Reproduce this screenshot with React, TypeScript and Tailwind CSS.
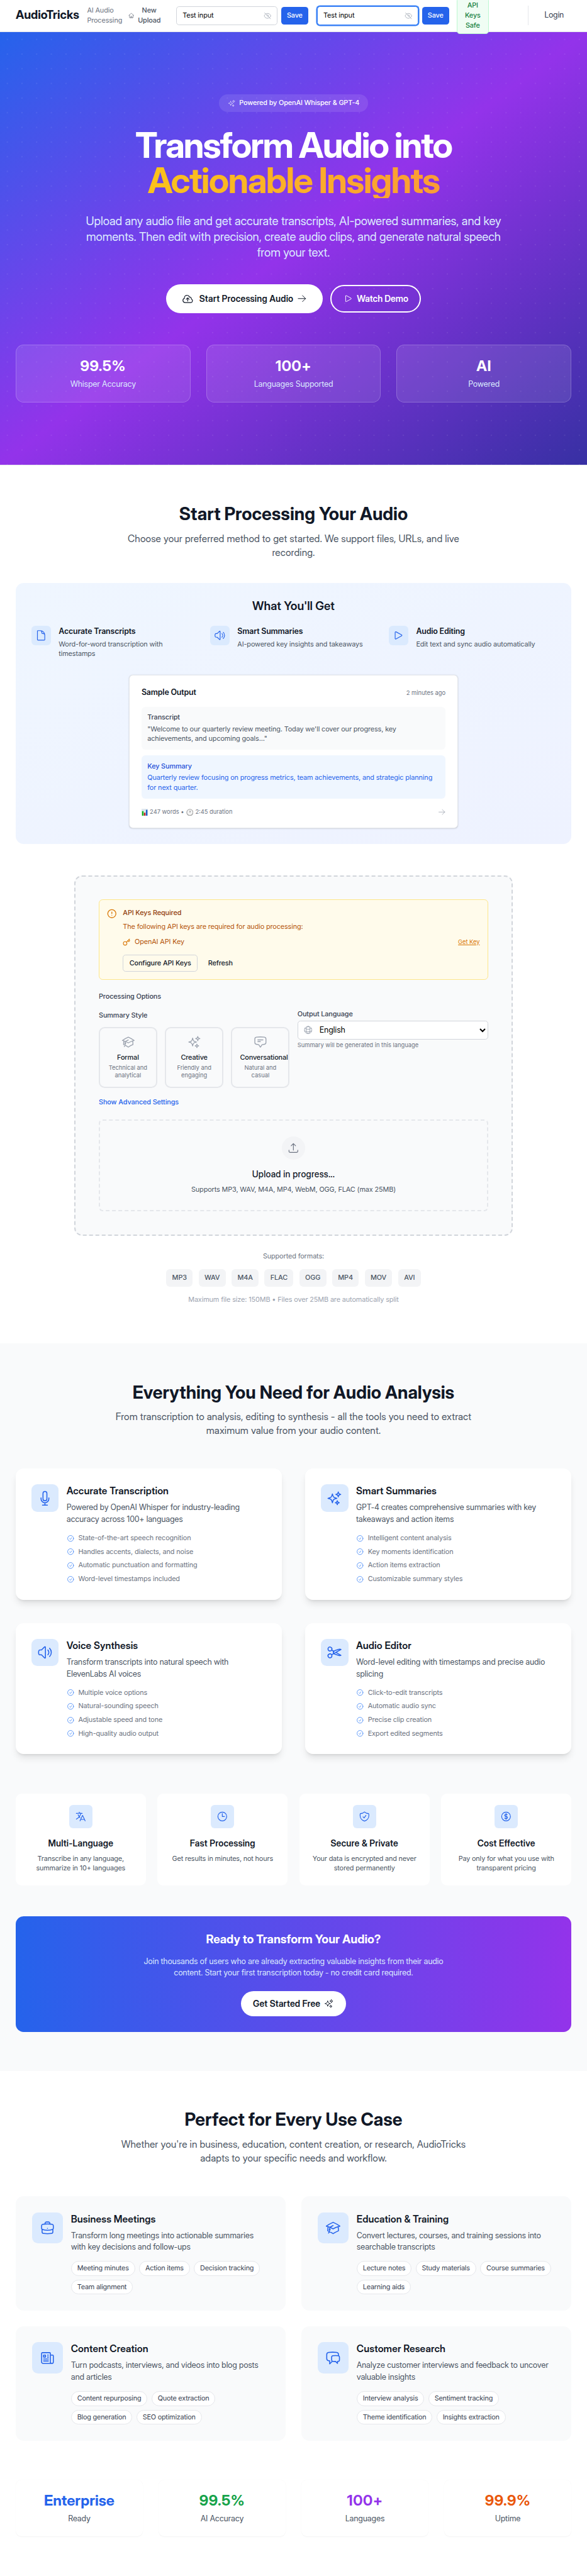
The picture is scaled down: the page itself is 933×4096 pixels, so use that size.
import type { ComponentType, ReactNode } from "react";
import {
  HiOutlineAcademicCap,
  HiOutlineArrowRight,
  HiOutlineArrowUpTray,
  HiOutlineBriefcase,
  HiOutlineChatBubbleBottomCenterText,
  HiOutlineChatBubbleLeftRight,
  HiOutlineCheckCircle,
  HiOutlineClock,
  HiOutlineCloudArrowUp,
  HiOutlineCurrencyDollar,
  HiOutlineDocument,
  HiOutlineEyeSlash,
  HiOutlineGlobeAlt,
  HiOutlineHome,
  HiOutlineLanguage,
  HiOutlineMicrophone,
  HiOutlineNewspaper,
  HiOutlinePlay,
  HiOutlineScissors,
  HiOutlineShieldCheck,
  HiOutlineSparkles,
  HiOutlineSpeakerWave,
} from "react-icons/hi2";
import { CircleAlert, Key } from "lucide-react";

type Icon = ComponentType<{ className?: string }>;

function KeyInput({ focused = false }: { focused?: boolean }) {
  return (
    <div
      className={
        focused
          ? "flex h-[38px] w-[207px] items-center justify-between rounded-md border border-[#3b82f6] bg-white pr-[11px] pl-3 ring-2 ring-[#3b82f6]"
          : "flex h-[38px] w-[207px] items-center justify-between rounded-md border border-[#d1d5db] bg-white pr-[11px] pl-3"
      }
    >
      <span className="text-[14px] leading-5 tracking-[-0.012em] text-black">Test input</span>
      <HiOutlineEyeSlash className="size-4 text-[#9ca3af]" />
    </div>
  );
}

function SaveButton() {
  return (
    <button className="h-9 w-[55px] rounded-md bg-[#2563eb] text-[14px] leading-5 font-medium tracking-[-0.013em] text-white">
      Save
    </button>
  );
}

function Header() {
  return (
    <header className="flex h-[65px] items-center border-b border-[#e5e7eb] bg-white pl-8">
      <div className="w-[130px] font-['Inter_Display','Inter',sans-serif] text-[24px] leading-8 font-bold whitespace-nowrap text-[#111827]">
        AudioTricks
      </div>
      <div className="ml-4 w-[71px] text-[14px] leading-5 tracking-[-0.012em] text-[#6b7280]">AI Audio Processing</div>
      <HiOutlineHome className="ml-[14px] size-3 shrink-0 text-[#4b5563]" />
      <div className="ml-[7px] w-[46px] text-center text-[14px] leading-5 font-medium tracking-[-0.013em] text-[#4b5563]">
        New Upload
      </div>
      <div className="ml-8 flex items-center gap-2">
        <KeyInput />
        <SaveButton />
      </div>
      <div className="ml-[18px] flex items-center gap-2">
        <KeyInput focused />
        <SaveButton />
      </div>
      <div className="relative z-10 ml-4 flex h-[74px] w-[65px] shrink-0 items-center justify-center rounded-md border border-[#bbf7d0] bg-[#f0fdf4] px-3 text-center text-[14px] leading-5 font-medium tracking-[-0.013em] text-[#15803d]">
        API Keys Safe
      </div>
      <div className="ml-20 h-10 w-px bg-[#e5e7eb]" />
      <div className="ml-[33px] text-[16px] leading-6 tracking-[-0.025em] text-[#374151]">Login</div>
    </header>
  );
}

const heroStats = [
  ["99.5%", "Whisper Accuracy"],
  ["100+", "Languages Supported"],
  ["AI", "Powered"],
];

function Hero() {
  return (
    <section className="bg-[radial-gradient(circle_at_15px_15px,rgba(255,255,255,0.08)_1px,transparent_1.5px),linear-gradient(to_bottom_right,#2563eb,#9333ea,#3730a3)] bg-[length:30px_30px,100%_100%] px-8 py-32 text-center">
      <div className="mx-auto flex h-9 w-[304px] items-center justify-center gap-2 rounded-full bg-white/10 text-[14px] leading-5 font-medium tracking-[-0.013em] whitespace-nowrap text-white">
        <HiOutlineSparkles className="size-4 text-white/70" />
        Powered by OpenAI Whisper &amp; GPT-4
      </div>
      <h1 className="mx-auto mt-8 max-w-[896px] font-['Inter_Display','Inter',sans-serif] text-[72px] leading-none font-bold tracking-[-0.0366em] text-white">
        Transform Audio into
        <span className="block bg-[linear-gradient(to_right,#facc15,#fb923c)] bg-clip-text tracking-[-0.031em] text-transparent">
          Actionable Insights
        </span>
      </h1>
      <p className="mx-auto mt-8 max-w-[896px] font-['Inter_Display','Inter',sans-serif] text-[24px] leading-8 tracking-[-0.006em] whitespace-nowrap text-[#dbeafe]">
        Upload any audio file and get accurate transcripts, AI-powered summaries, and key
        <br />
        moments. Then edit with precision, create audio clips, and generate natural speech
        <br />
        from your text.
      </p>
      <div className="mt-12 flex items-center justify-center gap-4 font-['Inter_Display','Inter',sans-serif] text-[18px] leading-7 font-semibold whitespace-nowrap">
        <button className="flex h-[60px] items-center rounded-full bg-white px-8 tracking-[0.013em] text-[#111827]">
          <HiOutlineCloudArrowUp className="mr-3 size-6" />
          Start Processing Audio
          <HiOutlineArrowRight className="ml-2 size-5" />
        </button>
        <button className="flex h-14 items-center rounded-full border-[2.6px] border-white px-[23.4px] text-white">
          <HiOutlinePlay className="mr-2 size-5" />
          Watch Demo
        </button>
      </div>
      <div className="mt-16 grid grid-cols-3 gap-8">
        {heroStats.map(([value, label]) => (
          <div key={label} className="h-[118px] rounded-2xl border border-white/20 bg-white/10 p-6">
            <div className="mb-2 font-['Inter_Display','Inter',sans-serif] text-[30px] leading-9 font-bold tracking-[0.025em] text-white">
              {value}
            </div>
            <div className="text-[16px] leading-6 tracking-[-0.018em] text-[#dbeafe]">{label}</div>
          </div>
        ))}
      </div>
    </section>
  );
}

function SectionTitle({ title, children }: { title: string; children: ReactNode }) {
  return (
    <div className="text-center font-['Inter_Display','Inter',sans-serif] whitespace-nowrap">
      <h2 className="text-[36px] leading-10 font-bold text-[#111827]">{title}</h2>
      <p className="mt-4 text-[20px] leading-7 tracking-[0.005em] text-[#4b5563]">{children}</p>
    </div>
  );
}

const benefits: [Icon, string, string][] = [
  [HiOutlineDocument, "Accurate Transcripts", "Word-for-word transcription with timestamps"],
  [HiOutlineSpeakerWave, "Smart Summaries", "AI-powered key insights and takeaways"],
  [HiOutlinePlay, "Audio Editing", "Edit text and sync audio automatically"],
];

function BarChartGlyph() {
  return (
    <svg viewBox="0 0 14 14" className="h-[15px] w-[13px]" preserveAspectRatio="none">
      <rect width="14" height="14" fill="#dfe8ee" />
      <rect x="1" y="4.5" width="3.4" height="9.5" fill="#12b31b" />
      <rect x="5.3" y="7.5" width="3.4" height="6.5" fill="#c81e1e" />
      <rect x="9.6" y="2" width="3.4" height="12" fill="#1d5fc4" />
    </svg>
  );
}

function ClockGlyph() {
  return (
    <svg viewBox="0 0 16 16" className="size-[15px]">
      <circle cx="8" cy="8" r="7.6" fill="#a3a3a3" />
      <circle cx="8" cy="7.8" r="6" fill="#f3f3f3" />
      <path d="M8 8V4M8 8L9.4 5" stroke="#777" strokeWidth="0.9" fill="none" />
    </svg>
  );
}

function SampleOutput() {
  return (
    <div className="mx-auto mt-8 h-[314px] w-[672px] rounded-lg border border-[#e5e7eb] bg-white p-6 shadow-sm">
      <div className="flex items-center justify-between">
        <span className="text-[16px] leading-6 font-semibold tracking-[-0.0155em] text-[#111827]">Sample Output</span>
        <span className="text-[12px] leading-4 text-[#6b7280]">2 minutes ago</span>
      </div>
      <div className="mt-4 rounded-lg bg-[#f9fafb] p-3 text-[14px] leading-5 tracking-[-0.012em] whitespace-nowrap">
        <div className="font-medium text-[#374151]">Transcript</div>
        <p className="mt-1 text-[#4b5563]">
          "Welcome to our quarterly review meeting. Today we'll cover our progress, key
          <br />
          achievements, and upcoming goals..."
        </p>
      </div>
      <div className="mt-3 rounded-lg bg-[#eff6ff] p-3 text-[14px] leading-5 tracking-[-0.012em] whitespace-nowrap">
        <div className="font-medium text-[#1d4ed8]">Key Summary</div>
        <p className="mt-1 text-[#2563eb]">
          Quarterly review focusing on progress metrics, team achievements, and strategic planning
          <br />
          for next quarter.
        </p>
      </div>
      <div className="mt-4 flex h-5 items-center justify-between pt-1">
        <div className="flex items-center gap-1 text-[12px] leading-4 whitespace-nowrap text-[#6b7280]">
          <BarChartGlyph />
          247 words •
          <ClockGlyph />
          2:45 duration
        </div>
        <HiOutlineArrowRight className="size-4 text-[#9ca3af]" />
      </div>
    </div>
  );
}

const styles: [Icon, string, string][] = [
  [HiOutlineAcademicCap, "Formal", "Technical and analytical"],
  [HiOutlineSparkles, "Creative", "Friendly and engaging"],
  [HiOutlineChatBubbleBottomCenterText, "Conversational", "Natural and casual"],
];

function UploadPanel() {
  return (
    <div className="mx-auto mt-16 h-[738px] w-[896px] rounded-2xl border-[2.6px] border-dashed border-[#d1d5db] bg-[#f9fafb] p-[47.4px] text-[14px] leading-5 tracking-[-0.012em]">
      <div className="flex h-[164px] rounded-lg border border-[#fde68a] bg-[#fffbeb] p-4">
        <CircleAlert className="mt-0.5 size-5 shrink-0 text-[#d97706]" />
        <div className="ml-3 flex-1">
          <div className="font-medium text-[#92400e]">API Keys Required</div>
          <div className="mt-2 text-[#b45309]">The following API keys are required for audio processing:</div>
          <div className="mt-3 flex items-center">
            <Key className="size-4 text-[#d97706]" />
            <span className="ml-2 flex-1 text-[#b45309]">OpenAI API Key</span>
            <a className="text-[12px] leading-4 tracking-normal text-[#d97706] underline">Get Key</a>
          </div>
          <div className="mt-4 flex gap-2 font-medium text-[#111827]">
            <button className="h-[34px] rounded-md border border-[#d1d5db] px-3">Configure API Keys</button>
            <button className="h-[34px] rounded-md border border-transparent px-3">Refresh</button>
          </div>
        </div>
      </div>

      <div className="mt-6 font-medium text-[#374151]">Processing Options</div>
      <div className="mt-4 grid grid-cols-2 gap-4">
        <div>
          <div className="pt-[3px] font-medium text-[#374151]">Summary Style</div>
          <div className="mt-[13px] grid grid-cols-3 gap-4">
            {styles.map(([StyleIcon, name, text]) => (
              <div
                key={name}
                className="flex h-[126px] min-w-0 flex-col items-center rounded-xl border-[2.6px] border-[#e5e7eb] p-[15.4px] text-center"
              >
                <StyleIcon className="size-7 shrink-0 text-[#9ca3af]" />
                <div className="mt-2 max-w-full font-medium text-[#111827]">{name}</div>
                <div className="mt-0.5 text-[12px] leading-4 tracking-normal text-[#6b7280]">{text}</div>
              </div>
            ))}
          </div>
        </div>
        <div>
          <div className="font-medium text-[#374151]">Output Language</div>
          <div className="relative mt-1">
            <HiOutlineGlobeAlt className="absolute top-[9px] left-3 size-5 text-[#9ca3af]" />
            <select className="block h-[38px] w-full rounded-md border border-[#d1d5db] bg-white pl-10 text-[16px] tracking-[-0.018em] text-black">
              <option>English</option>
            </select>
          </div>
          <div className="mt-1 text-[12px] leading-4 tracking-normal text-[#6b7280]">
            Summary will be generated in this language
          </div>
        </div>
      </div>
      <div className="mt-[19px] font-medium text-[#2563eb]">Show Advanced Settings</div>

      <div className="mt-[25px] flex h-[188px] flex-col items-center rounded-lg border-[2.6px] border-dashed border-[#e5e7eb] p-[31.4px]">
        <div className="flex size-12 items-center justify-center rounded-full bg-[#f3f4f6]">
          <HiOutlineArrowUpTray className="size-6 text-[#6b7280]" />
        </div>
        <div className="mt-4 font-['Inter_Display','Inter',sans-serif] text-[18px] leading-7 font-medium tracking-[0.019em] text-[#111827]">
          Upload in progress...
        </div>
        <div className="mt-2 text-[#4b5563]">Supports MP3, WAV, M4A, MP4, WebM, OGG, FLAC (max 25MB)</div>
      </div>
    </div>
  );
}

const formats = ["MP3", "WAV", "M4A", "FLAC", "OGG", "MP4", "MOV", "AVI"];

function Upload() {
  return (
    <section className="border-t border-[#e5e7eb] bg-white px-8 pt-[79.7px] pb-20">
      <SectionTitle title="Start Processing Your Audio">
        Choose your preferred method to get started. We support files, URLs, and live
        <br />
        recording.
      </SectionTitle>
      <div className="mt-12 rounded-2xl bg-[linear-gradient(to_bottom_right,#eff6ff,#eef2ff)] p-8">
        <h3 className="text-center font-['Inter_Display','Inter',sans-serif] text-[24px] leading-8 font-semibold tracking-[0.003em] text-[#111827]">
          What You'll Get
        </h3>
        <div className="mt-6 grid grid-cols-3 gap-6">
          {benefits.map(([BenefitIcon, title, text]) => (
            <div key={title} className="flex items-start gap-4">
              <div className="rounded-lg bg-[#dbeafe] p-2">
                <BenefitIcon className="size-6 text-[#2563eb]" />
              </div>
              <div>
                <div className="text-[16px] leading-6 font-semibold tracking-[-0.0155em] text-[#111827]">{title}</div>
                <p className="mt-1 text-[14px] leading-5 tracking-[-0.012em] text-[#4b5563]">{text}</p>
              </div>
            </div>
          ))}
        </div>
        <SampleOutput />
      </div>
      <UploadPanel />
      <div className="mt-8 text-center text-[14px] leading-5 tracking-[-0.012em]">
        <div className="text-[#6b7280]">Supported formats:</div>
        <div className="mt-4 flex justify-center gap-3">
          {formats.map((format) => (
            <span key={format} className="rounded-lg bg-[#f3f4f6] px-3 py-2 font-medium text-[#4b5563]">
              {format}
            </span>
          ))}
        </div>
        <div className="mt-4 text-[#9ca3af]">Maximum file size: 150MB • Files over 25MB are automatically split</div>
      </div>
    </section>
  );
}

const features: [Icon, string, string, string[]][] = [
  [
    HiOutlineMicrophone,
    "Accurate Transcription",
    "Powered by OpenAI Whisper for industry-leading accuracy across 100+ languages",
    [
      "State-of-the-art speech recognition",
      "Handles accents, dialects, and noise",
      "Automatic punctuation and formatting",
      "Word-level timestamps included",
    ],
  ],
  [
    HiOutlineSparkles,
    "Smart Summaries",
    "GPT-4 creates comprehensive summaries with key takeaways and action items",
    ["Intelligent content analysis", "Key moments identification", "Action items extraction", "Customizable summary styles"],
  ],
  [
    HiOutlineSpeakerWave,
    "Voice Synthesis",
    "Transform transcripts into natural speech with ElevenLabs AI voices",
    ["Multiple voice options", "Natural-sounding speech", "Adjustable speed and tone", "High-quality audio output"],
  ],
  [
    HiOutlineScissors,
    "Audio Editor",
    "Word-level editing with timestamps and precise audio splicing",
    ["Click-to-edit transcripts", "Automatic audio sync", "Precise clip creation", "Export edited segments"],
  ],
];

const perks: [Icon, string, string][] = [
  [HiOutlineLanguage, "Multi-Language", "Transcribe in any language, summarize in 10+ languages"],
  [HiOutlineClock, "Fast Processing", "Get results in minutes, not hours"],
  [HiOutlineShieldCheck, "Secure & Private", "Your data is encrypted and never stored permanently"],
  [HiOutlineCurrencyDollar, "Cost Effective", "Pay only for what you use with transparent pricing"],
];

function Features() {
  return (
    <section className="bg-[#f9fafb] px-8 py-20">
      <SectionTitle title="Everything You Need for Audio Analysis">
        From transcription to analysis, editing to synthesis - all the tools you need to extract
        <br />
        maximum value from your audio content.
      </SectionTitle>
      <div className="mt-16 grid grid-cols-2 gap-12">
        {features.map(([FeatureIcon, title, text, points]) => (
          <div
            key={title}
            className="flex items-start gap-4 rounded-2xl bg-white p-8 shadow-[0_10px_15px_-3px_rgba(0,0,0,0.1),0_4px_6px_-4px_rgba(0,0,0,0.1)]"
          >
            <div className="rounded-xl bg-[#dbeafe] p-3">
              <FeatureIcon className="size-8 text-[#2563eb]" />
            </div>
            <div>
              <h3 className="font-['Inter_Display','Inter',sans-serif] text-[20px] leading-7 font-semibold tracking-[0.007em] text-[#111827]">
                {title}
              </h3>
              <p className="mt-2 text-[16px] leading-6 tracking-[-0.023em] text-[#4b5563]">{text}</p>
              <ul className="mt-4 space-y-2 text-[14px] leading-5 tracking-[-0.012em] text-[#6b7280]">
                {points.map((point) => (
                  <li key={point} className="flex items-center gap-2">
                    <HiOutlineCheckCircle className="size-4 text-[#3b82f6]" />
                    {point}
                  </li>
                ))}
              </ul>
            </div>
          </div>
        ))}
      </div>
      <div className="mt-20 grid grid-cols-4 gap-6">
        {perks.map(([PerkIcon, title, text]) => (
          <div key={title} className="flex flex-col items-center rounded-xl bg-white p-6 text-center">
            <div className="rounded-lg bg-[#dbeafe] p-3">
              <PerkIcon className="size-6 text-[#2563eb]" />
            </div>
            <h4 className="mt-4 font-['Inter_Display','Inter',sans-serif] text-[18px] leading-7 font-semibold tracking-[0.014em] text-[#111827]">
              {title}
            </h4>
            <p className="mt-2 text-[14px] leading-5 tracking-[-0.016em] text-[#4b5563]">{text}</p>
          </div>
        ))}
      </div>
      <div className="mt-16 flex flex-col items-center rounded-2xl bg-[linear-gradient(to_right,#2563eb,#9333ea)] p-8 text-center whitespace-nowrap">
        <h3 className="font-['Inter_Display','Inter',sans-serif] text-[24px] leading-8 font-bold text-white">
          Ready to Transform Your Audio?
        </h3>
        <p className="mt-4 text-[16px] leading-6 tracking-[-0.0223em] text-[#dbeafe]">
          Join thousands of users who are already extracting valuable insights from their audio
          <br />
          content. Start your first transcription today - no credit card required.
        </p>
        <button className="mt-6 flex h-[52px] items-center gap-2 rounded-full bg-white px-6 font-['Inter_Display','Inter',sans-serif] text-[18px] leading-7 font-semibold tracking-[0.01em] text-[#111827]">
          Get Started Free
          <HiOutlineSparkles className="size-5" />
        </button>
      </div>
    </section>
  );
}

const useCases: [Icon, string, string, string[]][] = [
  [
    HiOutlineBriefcase,
    "Business Meetings",
    "Transform long meetings into actionable summaries with key decisions and follow-ups",
    ["Meeting minutes", "Action items", "Decision tracking", "Team alignment"],
  ],
  [
    HiOutlineAcademicCap,
    "Education & Training",
    "Convert lectures, courses, and training sessions into searchable transcripts",
    ["Lecture notes", "Study materials", "Course summaries", "Learning aids"],
  ],
  [
    HiOutlineNewspaper,
    "Content Creation",
    "Turn podcasts, interviews, and videos into blog posts and articles",
    ["Content repurposing", "Quote extraction", "Blog generation", "SEO optimization"],
  ],
  [
    HiOutlineChatBubbleLeftRight,
    "Customer Research",
    "Analyze customer interviews and feedback to uncover valuable insights",
    ["Interview analysis", "Sentiment tracking", "Theme identification", "Insights extraction"],
  ],
];

function UseCases() {
  return (
    <section className="bg-white px-8 py-20">
      <SectionTitle title="Perfect for Every Use Case">
        Whether you're in business, education, content creation, or research, AudioTricks
        <br />
        adapts to your specific needs and workflow.
      </SectionTitle>
      <div className="mt-16 grid grid-cols-2 gap-8">
        {useCases.map(([CaseIcon, title, text, tags]) => (
          <div key={title} className="flex h-[234px] items-start gap-4 rounded-2xl bg-[#f9fafb] p-[33px]">
            <div className="rounded-xl bg-[#dbeafe] p-4">
              <CaseIcon className="size-8 text-[#2563eb]" />
            </div>
            <div>
              <h3 className="font-['Inter_Display','Inter',sans-serif] text-[20px] leading-7 font-semibold tracking-[0.007em] text-[#111827]">
                {title}
              </h3>
              <p className="mt-2 text-[16px] leading-6 tracking-[-0.023em] text-[#4b5563]">{text}</p>
              <div className="mt-4 flex flex-wrap gap-2">
                {tags.map((tag) => (
                  <span
                    key={tag}
                    className="flex h-[30px] items-center rounded-full border border-[#e5e7eb] bg-white px-[11.6px] text-[14px] leading-5 tracking-[-0.021em] whitespace-nowrap text-[#374151]"
                  >
                    {tag}
                  </span>
                ))}
              </div>
            </div>
          </div>
        ))}
      </div>
      <div className="mt-20 grid grid-cols-4 gap-8 text-center">
        <Metric value="Enterprise" label="Ready" color="text-[#2563eb]" />
        <Metric value="99.5%" label="AI Accuracy" color="tracking-[0.025em] text-[#16a34a]" />
        <Metric value="100+" label="Languages" color="tracking-[0.025em] text-[#9333ea]" />
        <Metric value="99.9%" label="Uptime" color="tracking-[0.025em] text-[#ea580c]" />
      </div>
    </section>
  );
}

function Metric({ value, label, color }: { value: string; label: string; color: string }) {
  return (
    <div className="rounded-xl bg-white p-6 shadow-[0_1px_2px_0_rgba(0,0,0,0.05)]">
      <div className={`font-['Inter_Display','Inter',sans-serif] text-[30px] leading-9 font-bold ${color}`}>{value}</div>
      <div className="mt-2 text-[16px] leading-6 tracking-[-0.02em] text-[#4b5563]">{label}</div>
    </div>
  );
}

export default function App() {
  return (
    <div className="w-[1200px] overflow-hidden bg-white font-['Inter',sans-serif] [zoom:0.7775]">
      <Header />
      <Hero />
      <Upload />
      <Features />
      <UseCases />
    </div>
  );
}
